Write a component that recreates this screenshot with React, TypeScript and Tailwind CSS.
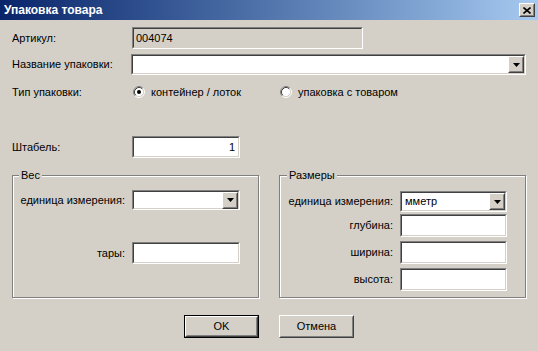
import React from "react";

function Sunken({ className = "", inner = "bg-white", children }: { className?: string; inner?: string; children?: React.ReactNode }) {
  return (
    <div className={"flex-none border border-t-[#808080] border-l-[#808080] border-b-white border-r-white " + className}>
      <div className={"h-full w-full flex items-center border border-t-[#404040] border-l-[#404040] border-b-[#d4d0c8] border-r-[#d4d0c8] " + inner}>
        {children}
      </div>
    </div>
  );
}

function Raised({ className = "", children }: { className?: string; children?: React.ReactNode }) {
  return (
    <div className={"flex-none border border-t-white border-l-white border-b-[#404040] border-r-[#404040] " + className}>
      <div className="h-full w-full flex items-center justify-center bg-[#d4d0c8] border border-t-[#d4d0c8] border-l-[#d4d0c8] border-b-[#808080] border-r-[#808080]">
        {children}
      </div>
    </div>
  );
}

function Arrow() {
  return (
    <svg width="7" height="4" viewBox="0 0 7 4">
      <polygon points="0,0 7,0 3.5,4" fill="#000" />
    </svg>
  );
}

function Combo({ className = "", value = "" }: { className?: string; value?: string }) {
  return (
    <Sunken className={className}>
      <span className="flex-1 pl-[3px] leading-none">{value}</span>
      <Raised className="w-[16px] h-[17px] mr-0">
        <Arrow />
      </Raised>
    </Sunken>
  );
}

function Radio({ checked }: { checked?: boolean }) {
  return (
    <svg width="12" height="12" viewBox="0 0 12 12" className="flex-none">
      <circle cx="6" cy="6" r="4.5" fill="#fff" />
      <path d="M2.11 9.89 A5.5 5.5 0 0 1 9.89 2.11" stroke="#808080" strokeWidth="1" fill="none" />
      <path d="M9.89 2.11 A5.5 5.5 0 0 1 2.11 9.89" stroke="#ffffff" strokeWidth="1" fill="none" />
      <path d="M2.82 9.18 A4.5 4.5 0 0 1 9.18 2.82" stroke="#404040" strokeWidth="1" fill="none" />
      <path d="M9.18 2.82 A4.5 4.5 0 0 1 2.82 9.18" stroke="#d4d0c8" strokeWidth="1" fill="none" />
      {checked && <circle cx="6" cy="6" r="2" fill="#000" />}
    </svg>
  );
}

function Group({ title, titleClass, className = "", children }: { title: string; titleClass: string; className?: string; children?: React.ReactNode }) {
  return (
    <div className={"relative flex-none border border-[#808080] shadow-[inset_1px_1px_0_#fff,1px_1px_0_#fff] " + className}>
      <span className={"absolute top-[-7px] bg-[#d4d0c8] px-[2px] leading-[13px] " + titleClass}>{title}</span>
      {children}
    </div>
  );
}

export default function App() {
  return (
    <div className="w-[538px] h-[351px] bg-[#d4d0c8] flex flex-col overflow-hidden text-[11px] text-black font-['Liberation_Sans',Arial,sans-serif]">
      {/* title bar */}
      <div className="h-[20px] flex-none flex items-center justify-between pl-[4px] pr-[3px] bg-linear-to-r from-[#0a246a] to-[#a6caf0]">
        <span className="text-white font-bold text-[12px] leading-none">Упаковка товара</span>
        <Raised className="w-[16px] h-[14px]">
          <svg width="8" height="7" viewBox="0 0 8 7">
            <path d="M0.5 0.5 L7.5 6.5 M7.5 0.5 L0.5 6.5" stroke="#000" strokeWidth="1.6" />
          </svg>
        </Raised>
      </div>

      <div className="flex flex-col px-[12px]">
        <div className="flex items-center mt-[7px] h-[22px]">
          <span className="w-[120px]">Артикул:</span>
          <Sunken className="w-[231px] h-[22px]" inner="bg-[#d4d0c8]">
            <span className="pl-[2px]">004074</span>
          </Sunken>
        </div>
        <div className="flex items-center mt-[5px] h-[21px]">
          <span className="w-[120px]">Название упаковки:</span>
          <Combo className="w-[395px] h-[21px]" />
        </div>
        <div className="flex items-center mt-[9px] h-[16px]">
          <span className="w-[121px]">Тип упаковки:</span>
          <div className="flex items-center w-[147px] gap-[6px]">
            <Radio checked />
            <span>контейнер / лоток</span>
          </div>
          <div className="flex items-center gap-[6px]">
            <Radio />
            <span>упаковка с товаром</span>
          </div>
        </div>
        <div className="flex items-center mt-[36px] h-[22px]">
          <span className="w-[120px]">Штабель:</span>
          <Sunken className="w-[108px] h-[22px]">
            <span className="flex-1 text-right pr-[3px]">1</span>
          </Sunken>
        </div>

        <div className="flex gap-[20px] mt-[17px]">
          <Group title="Вес" titleClass="left-[6px]" className="w-[247px] h-[123px] pt-[14px]">
            <div className="flex items-center h-[20px]">
              <span className="w-[119px] text-right pr-[7px]">единица измерения:</span>
              <Combo className="w-[108px] h-[20px]" />
            </div>
            <div className="flex items-center h-[22px] mt-[32px]">
              <span className="w-[119px] text-right pr-[7px]">тары:</span>
              <Sunken className="w-[108px] h-[22px]" />
            </div>
          </Group>
          <Group title="Размеры" titleClass="left-[7px]" className="w-[247px] h-[123px] pt-[15px]">
            <div className="flex items-center h-[21px]">
              <span className="w-[120px] text-right pr-[7px]">единица измерения:</span>
              <Combo className="w-[107px] h-[21px]" value="мметр" />
            </div>
            <div className="flex items-center h-[23px] mt-[2px]">
              <span className="w-[120px] text-right pr-[7px]">глубина:</span>
              <Sunken className="w-[107px] h-[23px]" />
            </div>
            <div className="flex items-center h-[23px] mt-[4px]">
              <span className="w-[120px] text-right pr-[7px]">ширина:</span>
              <Sunken className="w-[107px] h-[23px]" />
            </div>
            <div className="flex items-center h-[23px] mt-[4px]">
              <span className="w-[120px] text-right pr-[7px]">высота:</span>
              <Sunken className="w-[107px] h-[23px]" />
            </div>
          </Group>
        </div>

        <div className="flex justify-center gap-[20px] mt-[17px] pl-[0px]">
          <div className="border border-black w-[75px] h-[23px] flex">
            <Raised className="w-full h-full">
              <span>OK</span>
            </Raised>
          </div>
          <Raised className="w-[75px] h-[23px]">
            <span>Отмена</span>
          </Raised>
        </div>
      </div>
    </div>
  );
}
